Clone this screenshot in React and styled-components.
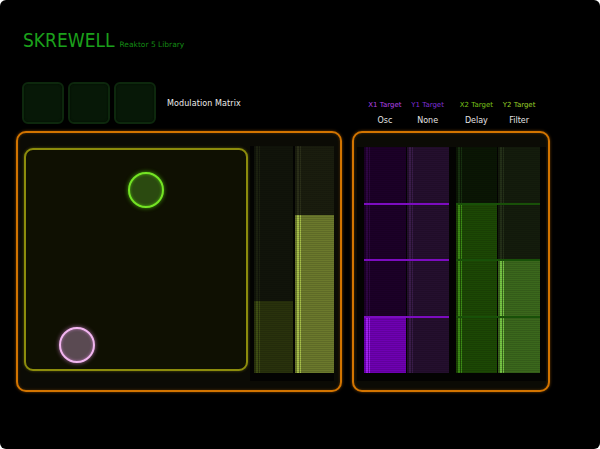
import styled, { createGlobalStyle } from 'styled-components'

const GlobalStyle = createGlobalStyle`
    html, body {
        margin: 0;
        padding: 0;
        background: #fff;
    }

    body {
        font-family: 'DejaVu Sans', Verdana, sans-serif;
    }
`

const leftBars = [
    { id: 'a', value: 0.317, bg: '#11140a', stripe: '#1c2110', fill: '#29320c', fillStripe: '#3f4e14' },
    { id: 'b', value: 0.696, bg: '#1a1d0e', stripe: '#2b2f19', fill: '#6b792c', fillStripe: '#a6bf4a' }
]

const groups = [
    {
        id: 'osc1',
        line: '#7c0cc0',
        items: [
            { label: 'X1 Target', color: '#b040e8', name: 'Osc', value: 0.25, bg: '#1c0028', stripe: '#2d0642', fill: '#6e00b2', fillStripe: '#a020f0' },
            { label: 'Y1 Target', color: '#7f2fd8', name: 'None', value: 0, bg: '#240f2e', stripe: '#3a1c4a', fill: '#4a1a60', fillStripe: '#6a2a88' }
        ]
    },
    {
        id: 'osc2',
        line: '#185008',
        items: [
            { label: 'X2 Target', color: '#78c018', name: 'Delay', value: 0.75, bg: '#0a1604', stripe: '#173010', fill: '#1c4804', fillStripe: '#3c8c16' },
            { label: 'Y2 Target', color: '#98d028', name: 'Filter', value: 0.5, bg: '#141c0c', stripe: '#243018', fill: '#3b681c', fillStripe: '#76c444' }
        ]
    }
]

const Bar = ({ value, bg, stripe, fill, fillStripe }) => (
    <BarTrack $bg={bg} $stripe={stripe}>
        <BarFill $fill={fill} $stripe={fillStripe} style={{ height: `${value * 100}%` }} />
    </BarTrack>
)

const App = () => {
    return (
        <Frame>
            <GlobalStyle />
            <Header>
                <Title>SKREWELL</Title>
                <Subtitle>Reaktor 5 Library</Subtitle>
            </Header>
            <Columns>
                <LeftColumn>
                    <TopBar>
                        <Pads>
                            <PadButton />
                            <PadButton />
                            <PadButton />
                        </Pads>
                        <SectionName>Modulation Matrix</SectionName>
                    </TopBar>
                    <Panel>
                        <XYPad>
                            <Knob $x={120} $y={40} $ring="#74e424" $glow="rgba(90, 210, 20, 0.75)" $fill="#2b4a10" />
                            <Knob $x={51} $y={195} $ring="#f2b6f0" $glow="rgba(220, 140, 220, 0.7)" $fill="#5a4a52" />
                        </XYPad>
                        <Well>
                            <BarPair>
                                {leftBars.map(bar => (
                                    <Bar key={bar.id} {...bar} />
                                ))}
                            </BarPair>
                        </Well>
                    </Panel>
                </LeftColumn>
                <RightColumn>
                    <TargetBar>
                        {groups.map(group => (
                            <TargetGroup key={group.id}>
                                {group.items.map(item => (
                                    <TargetCell key={item.label}>
                                        <TargetLabel $color={item.color}>{item.label}</TargetLabel>
                                        <TargetName>{item.name}</TargetName>
                                    </TargetCell>
                                ))}
                            </TargetGroup>
                        ))}
                    </TargetBar>
                    <Panel $matrix>
                        <MatrixWell>
                            {groups.map(group => (
                                <MatrixGroup key={group.id}>
                                    {group.items.map(item => (
                                        <Bar key={item.label} {...item} />
                                    ))}
                                    <RowLine $at={25} $color={group.line} />
                                    <RowLine $at={50} $color={group.line} />
                                    <RowLine $at={75} $color={group.line} />
                                </MatrixGroup>
                            ))}
                        </MatrixWell>
                    </Panel>
                </RightColumn>
            </Columns>
        </Frame>
    )
}

const Frame = styled.div`
    width: 600px;
    height: 449px;
    background: #000;
    border-radius: 6px;
    overflow: hidden;
    box-sizing: border-box;
`

const Header = styled.div`
    display: flex;
    align-items: baseline;
    gap: 5px;
    padding: 31px 0 0 23px;
`

const Title = styled.h1`
    margin: 0;
    font-family: 'DejaVu Sans Condensed', 'DejaVu Sans', sans-serif;
    font-stretch: condensed;
    font-weight: normal;
    font-size: 19px;
    line-height: 19px;
    color: #1ba01b;
`

const Subtitle = styled.span`
    font-size: 7.5px;
    color: #148a14;
`

const Columns = styled.div`
    display: flex;
    gap: 10px;
    padding-left: 16px;
    margin-top: 32px;
`

const LeftColumn = styled.div`
    width: 326px;
    display: flex;
    flex-direction: column;
`

const RightColumn = styled.div`
    width: 198px;
    display: flex;
    flex-direction: column;
`

const TopBar = styled.div`
    height: 42px;
    margin-bottom: 7px;
    display: flex;
    align-items: center;
    padding-left: 6px;
`

const Pads = styled.div`
    display: flex;
    gap: 4px;
`

const PadButton = styled.div`
    width: 42px;
    height: 42px;
    box-sizing: border-box;
    border-radius: 6px;
    background: #071807;
    border: 2px solid #0d280d;
    box-shadow: inset 0 0 2px rgba(0, 0, 0, 0.6);
`

const SectionName = styled.span`
    margin-left: 11px;
    font-size: 8px;
    color: #ececec;
    letter-spacing: 0.1px;
`

const TargetBar = styled.div`
    height: 49px;
    box-sizing: border-box;
    display: flex;
    align-items: flex-end;
    gap: 7px;
    padding: 0 10px 5px 12px;
`

const TargetGroup = styled.div`
    flex: 1;
    display: flex;
    gap: 1px;
`

const TargetCell = styled.div`
    flex: 1;
    display: flex;
    flex-direction: column;
    align-items: center;
`

const TargetLabel = styled.span`
    font-size: 7px;
    line-height: 10px;
    color: ${({ $color }) => $color};
    white-space: nowrap;
`

const TargetName = styled.span`
    margin-top: 6px;
    font-size: 8px;
    line-height: 10px;
    color: #e4e4e4;
`

const Panel = styled.div`
    height: 261px;
    box-sizing: border-box;
    display: flex;
    align-items: flex-start;
    padding: ${({ $matrix }) => ($matrix ? '14px 2px 0 3px' : '13px 6px 0 6px')};
    background: #0b0b05;
    border: 2px solid #d27400;
    border-radius: 10px;
    box-shadow: 0 0 3px rgba(220, 120, 0, 0.55), inset 0 0 3px rgba(220, 120, 0, 0.35);
`

const XYPad = styled.div`
    position: relative;
    width: 224px;
    height: 223px;
    margin-top: 2px;
    flex-shrink: 0;
    box-sizing: border-box;
    background: #0f1002;
    border: 2px solid #8c8c0c;
    border-radius: 9px;
    box-shadow: 0 0 3px rgba(170, 170, 20, 0.45);
`

const Knob = styled.div`
    position: absolute;
    left: ${({ $x }) => $x - 18}px;
    top: ${({ $y }) => $y - 18}px;
    width: 36px;
    height: 36px;
    box-sizing: border-box;
    border-radius: 50%;
    background: ${({ $fill }) => $fill};
    border: 2px solid ${({ $ring }) => $ring};
    box-shadow: 0 0 4px ${({ $glow }) => $glow}, inset 0 0 3px ${({ $glow }) => $glow};
`

const Well = styled.div`
    flex: 1;
    margin-left: 2px;
    padding: 0 0 8px 4px;
    background: #030302;
`

const BarPair = styled.div`
    height: 227px;
    display: flex;
    gap: 2px;
`

const MatrixWell = styled.div`
    flex: 1;
    display: flex;
    gap: 7px;
    padding: 0 6px 8px 7px;
    background: #030302;
`

const MatrixGroup = styled.div`
    position: relative;
    flex: 1;
    height: 226px;
    display: flex;
    gap: 1px;
`

const RowLine = styled.div`
    position: absolute;
    left: 0;
    right: 0;
    top: calc(${({ $at }) => $at}% - 1px);
    height: 2px;
    background: ${({ $color }) => $color};
`

const stripes = color => `
    linear-gradient(to right,
        transparent 0 2px, ${color} 2px 4px,
        transparent 4px 5px, ${color} 5px 6px,
        transparent 6px)
`

const scanlines = 'repeating-linear-gradient(to bottom, rgba(0, 0, 0, 0.12) 0 1px, transparent 1px 2px)'

const BarTrack = styled.div`
    flex: 1;
    display: flex;
    flex-direction: column;
    justify-content: flex-end;
    background-color: ${({ $bg }) => $bg};
    background-image: ${scanlines}, ${({ $stripe }) => stripes($stripe)};
`

const BarFill = styled.div`
    background-color: ${({ $fill }) => $fill};
    background-image: ${scanlines}, ${({ $stripe }) => stripes($stripe)};
`

export default App
